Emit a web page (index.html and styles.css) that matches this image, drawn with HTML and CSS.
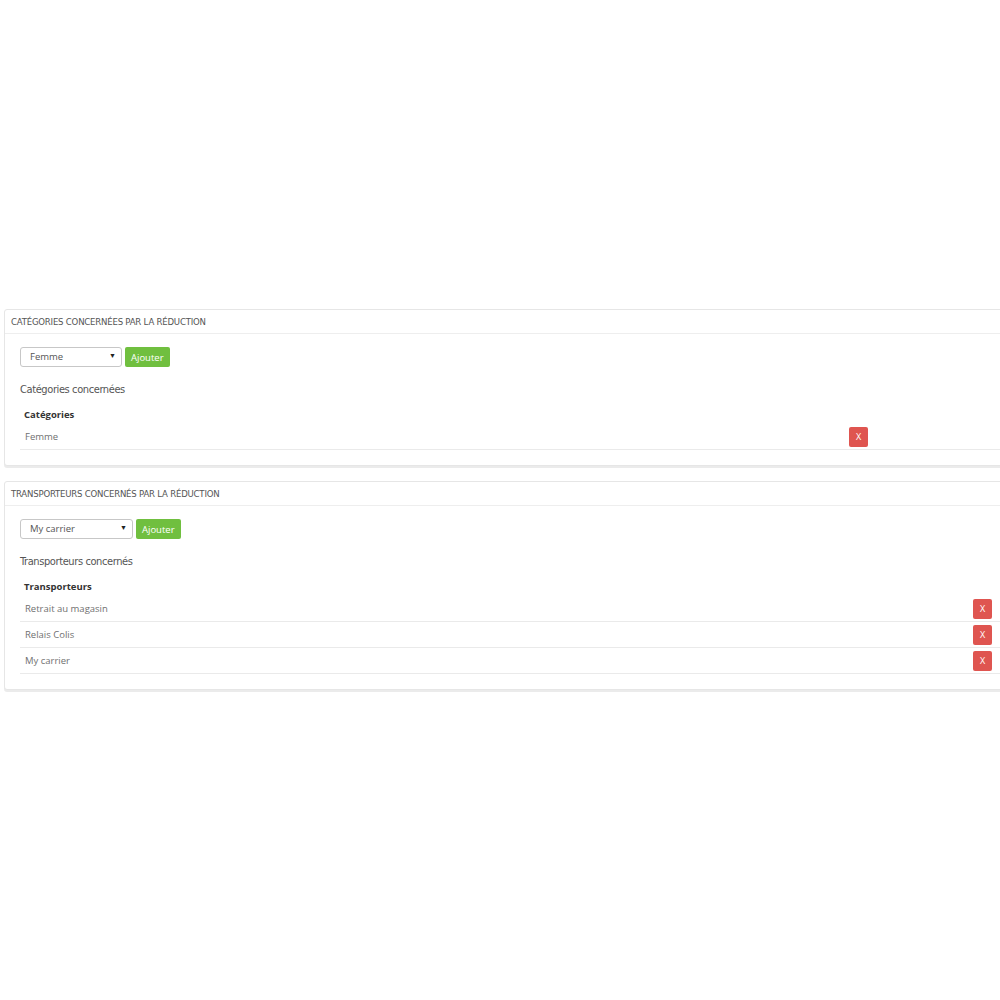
FILE: index.html
```html
<!DOCTYPE html>
<html lang="fr">
<head>
  <meta charset="UTF-8">
  <title>Réduction</title>
  <link rel="stylesheet" href="styles.css">
</head>
<body>
  <div class="page">
    <div class="panel">
      <h3 class="panel-heading">Catégories concernées par la réduction</h3>
      <div class="add-row">
        <div class="select select-cat">Femme<span class="caret">▼</span></div>
        <button class="btn-add">Ajouter</button>
      </div>
      <h4 class="sub-title">Catégories concernées</h4>
      <table class="list list-cat">
        <thead>
          <tr><th>Catégories</th><th></th></tr>
        </thead>
        <tbody>
          <tr><td>Femme</td><td class="action"><button class="btn-del">X</button></td></tr>
        </tbody>
      </table>
    </div>

    <div class="panel">
      <h3 class="panel-heading">Transporteurs concernés par la réduction</h3>
      <div class="add-row">
        <div class="select select-car">My carrier<span class="caret">▼</span></div>
        <button class="btn-add">Ajouter</button>
      </div>
      <h4 class="sub-title">Transporteurs concernés</h4>
      <table class="list">
        <thead>
          <tr><th>Transporteurs</th><th></th></tr>
        </thead>
        <tbody>
          <tr><td>Retrait au magasin</td><td class="action"><button class="btn-del">X</button></td></tr>
          <tr><td>Relais Colis</td><td class="action"><button class="btn-del">X</button></td></tr>
          <tr><td>My carrier</td><td class="action"><button class="btn-del">X</button></td></tr>
        </tbody>
      </table>
    </div>
  </div>
</body>
</html>
```

FILE: styles.css
```css
body {
  margin: 0;
  background: #fff;
  font-family: 'Open Sans', sans-serif;
  font-size: 9.5px;
  color: #707070;
  overflow: hidden;
}

.page {
  padding: 309px 0 0 4px;
  width: 1012px;
}

.panel {
  border: 1px solid #e6e6e6;
  border-radius: 3px;
  box-shadow: 0 2px 0 rgba(0, 0, 0, 0.08);
  padding: 0 15px 15px;
  margin-bottom: 15px;
  background: #fff;
}

.panel-heading {
  margin: 0 -15px 13px;
  padding: 0 6px;
  height: 23px;
  line-height: 24px;
  border-bottom: 1px solid #eee;
  font-family: 'DejaVu Sans', sans-serif;
  font-stretch: condensed;
  font-weight: normal;
  font-size: 9.5px;
  letter-spacing: -0.2px;
  text-transform: uppercase;
  color: #555;
}

.add-row {
  display: flex;
  gap: 3px;
  align-items: center;
}

.select {
  height: 18px;
  line-height: 18px;
  border: 1px solid #c7c7c7;
  border-radius: 3px;
  padding: 0 5px 0 9px;
  display: flex;
  justify-content: space-between;
  color: #555;
}

.select-cat { width: 86px; }
.select-car { width: 97px; }

.caret {
  font-size: 7px;
  color: #222;
  line-height: 16px;
}

.btn-add {
  height: 20px;
  padding: 0 6px;
  border: 0;
  border-radius: 2px;
  background: #70bf3f;
  color: #fff;
  font-family: 'Open Sans', sans-serif;
  font-size: 9.5px;
}

.sub-title {
  margin: 16px 0 8px;
  font-family: 'DejaVu Sans', sans-serif;
  font-stretch: condensed;
  font-weight: normal;
  font-size: 11px;
  letter-spacing: -0.4px;
  color: #555;
}

.list {
  width: 100%;
  border-collapse: collapse;
}

.list th {
  text-align: left;
  font-weight: bold;
  color: #333;
  padding: 0 4px;
  height: 20px;
}

.list td {
  padding: 0 5px;
  height: 25px;
  border-bottom: 1px solid #eaeaea;
}

.list td.action {
  text-align: right;
  width: 20px;
  padding: 0 8px 0 0;
}

.list-cat td.action {
  padding-right: 132px;
}

.btn-del {
  width: 19px;
  height: 20px;
  padding: 0;
  border: 0;
  border-radius: 2px;
  background: #df5550;
  color: #fff;
  font-family: 'Open Sans', sans-serif;
  font-size: 9px;
  display: block;
  margin-left: auto;
}
```
